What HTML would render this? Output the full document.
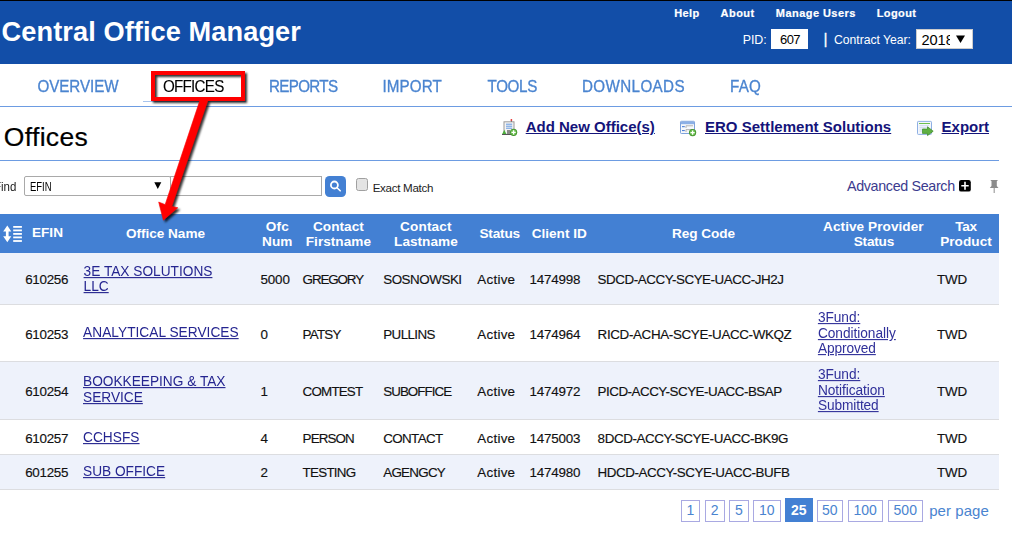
<!DOCTYPE html>
<html><head><meta charset="utf-8"><title>Central Office Manager</title>
<style>
html,body{margin:0;padding:0;}
body{width:1012px;height:537px;overflow:hidden;position:relative;background:#fff;font-family:"Liberation Sans",sans-serif;}
.t{position:absolute;white-space:nowrap;}
.b{position:absolute;}
.pg{position:absolute;box-sizing:border-box;border:1px solid #a9a9e2;color:#4a84d0;font-size:14px;line-height:19.5px;text-align:center;}
.pg.on{background:#4380d3;border-color:#4380d3;color:#fff;font-weight:bold;line-height:22px;}
</style></head><body>
<div class="b" style="left:0px;top:0px;width:1012px;height:1px;background:#000;"></div>
<div class="b" style="left:0px;top:1px;width:1012px;height:63px;background:#124ea8;"></div>
<div class="t " style="left:1.60px;top:18.18px;font-size:27.2px;line-height:27.2px;font-weight:bold;color:#fff;letter-spacing:0.080px;">Central Office Manager</div>
<div class="t " style="left:674.20px;top:8.29px;font-size:11px;line-height:11px;font-weight:bold;color:#fff;letter-spacing:0.366px;-webkit-text-stroke:0.2px #fff;">Help</div>
<div class="t " style="left:720.50px;top:8.29px;font-size:11px;line-height:11px;font-weight:bold;color:#fff;letter-spacing:0.487px;-webkit-text-stroke:0.2px #fff;">About</div>
<div class="t " style="left:775.80px;top:8.29px;font-size:11px;line-height:11px;font-weight:bold;color:#fff;letter-spacing:0.451px;-webkit-text-stroke:0.2px #fff;">Manage Users</div>
<div class="t " style="left:876.70px;top:8.29px;font-size:11px;line-height:11px;font-weight:bold;color:#fff;letter-spacing:0.391px;-webkit-text-stroke:0.2px #fff;">Logout</div>
<div class="t " style="left:742.80px;top:33.80px;font-size:12.4px;line-height:12.4px;color:#fff;letter-spacing:-0.104px;">PID:</div>
<div class="b" style="left:771px;top:29px;width:37px;height:20px;background:#fff;"></div>
<div class="t " style="left:780.00px;top:33.30px;font-size:13px;line-height:13px;color:#000;letter-spacing:-0.563px;">607</div>
<div class="t " style="left:823.40px;top:31.08px;font-size:15.5px;line-height:15.5px;color:#fff;-webkit-text-stroke:0.3px #fff;">|</div>
<div class="t " style="left:834.00px;top:33.97px;font-size:12.2px;line-height:12.2px;color:#fff;letter-spacing:-0.022px;">Contract Year:</div>
<div class="b" style="left:916px;top:29px;width:57px;height:20px;background:#fff;border:1px solid #ccc;box-sizing:border-box;"></div>
<div class="b" style="left:921px;top:29px;width:29px;height:20px;overflow:hidden;"><div class="t" style="left:0.4px;top:3.5px;font-size:14.6px;line-height:14.6px;color:#000;">2018</div></div>
<svg class="b" style="left:952px;top:30px" width="16" height="18" viewBox="952 30 16 18"><path d="M956 35.4 H965 L960.5 43 Z" fill="#000"/></svg>
<div class="t " style="left:37.50px;top:79.03px;font-size:15.2px;line-height:15.2px;color:#4a84d0;letter-spacing:-0.081px;-webkit-text-stroke:0.3px #4a84d0;transform:scaleY(1.1);transform-origin:0 12.87px;">OVERVIEW</div>
<div class="t " style="left:163.00px;top:79.03px;font-size:15.2px;line-height:15.2px;color:#000;letter-spacing:-0.753px;-webkit-text-stroke:0.1px #000;transform:scaleY(1.1);transform-origin:0 12.87px;">OFFICES</div>
<div class="t " style="left:269.00px;top:79.03px;font-size:15.2px;line-height:15.2px;color:#4a84d0;letter-spacing:-0.672px;-webkit-text-stroke:0.3px #4a84d0;transform:scaleY(1.1);transform-origin:0 12.87px;">REPORTS</div>
<div class="t " style="left:382.50px;top:79.03px;font-size:15.2px;line-height:15.2px;color:#4a84d0;letter-spacing:0.111px;-webkit-text-stroke:0.3px #4a84d0;transform:scaleY(1.1);transform-origin:0 12.87px;">IMPORT</div>
<div class="t " style="left:487.50px;top:79.03px;font-size:15.2px;line-height:15.2px;color:#4a84d0;letter-spacing:-0.349px;-webkit-text-stroke:0.3px #4a84d0;transform:scaleY(1.1);transform-origin:0 12.87px;">TOOLS</div>
<div class="t " style="left:582.00px;top:79.03px;font-size:15.2px;line-height:15.2px;color:#4a84d0;letter-spacing:0.372px;-webkit-text-stroke:0.3px #4a84d0;transform:scaleY(1.1);transform-origin:0 12.87px;">DOWNLOADS</div>
<div class="t " style="left:730.00px;top:79.03px;font-size:15.2px;line-height:15.2px;color:#4a84d0;letter-spacing:0.198px;-webkit-text-stroke:0.3px #4a84d0;transform:scaleY(1.1);transform-origin:0 12.87px;">FAQ</div>
<div class="b" style="left:143px;top:101px;width:103px;height:1px;background:#6d9ce2;opacity:.6;"></div>
<div class="b" style="left:0px;top:106px;width:1012px;height:1px;background:#6d9ce2;"></div>
<div class="t " style="left:3.70px;top:123.57px;font-size:26.5px;line-height:26.5px;color:#000;letter-spacing:0.360px;-webkit-text-stroke:0.2px #000;">Offices</div>
<div class="b" style="left:0px;top:160px;width:999px;height:1px;background:#6d9ce2;"></div>
<div class="t " style="left:525.70px;top:119.10px;font-size:15px;line-height:15px;font-weight:bold;color:#14147a;text-decoration:underline;">Add New Office(s)</div>
<div class="t " style="left:705.00px;top:119.10px;font-size:15px;line-height:15px;font-weight:bold;color:#14147a;letter-spacing:0.015px;text-decoration:underline;">ERO Settlement Solutions</div>
<div class="t " style="left:941.60px;top:119.10px;font-size:15px;line-height:15px;font-weight:bold;color:#14147a;letter-spacing:-0.017px;text-decoration:underline;">Export</div>
<div class="t " style="left:-5.60px;top:180.84px;font-size:12px;line-height:12px;color:#222;transform:scaleX(0.9596);transform-origin:0 0;">Find</div>
<div class="b" style="left:24px;top:176px;width:147px;height:20px;background:#fff;border:1px solid #a9a9a9;box-sizing:border-box;border-radius:2px;"></div>
<div class="t " style="left:29.60px;top:180.84px;font-size:12px;line-height:12px;color:#000;transform:scaleX(0.7902);transform-origin:0 0;">EFIN</div>
<svg class="b" style="left:150px;top:178px" width="16" height="16" viewBox="150 178 16 16"><path d="M154.3 182.2 H161.3 L157.8 188.9 Z" fill="#000"/></svg>
<div class="b" style="left:170px;top:176px;width:152px;height:20px;background:#fff;border:1px solid #a9a9a9;box-sizing:border-box;"></div>
<div class="b" style="left:325px;top:176px;width:20.600000000000023px;height:20.80000000000001px;background:#4380d3;border-radius:4.5px;"></div>
<div class="t " style="left:372.70px;top:181.78px;font-size:11.6px;line-height:11.6px;color:#222;letter-spacing:-0.302px;">Exact Match</div>
<div class="b" style="left:356px;top:178px;width:12px;height:13px;background:#e4e4e4;border:1px solid #a0a0a0;box-sizing:border-box;border-radius:2.5px;"></div>
<div class="t " style="left:847.00px;top:179.10px;font-size:14.3px;line-height:14.3px;color:#3b3b8e;letter-spacing:-0.339px;">Advanced Search</div>
<div class="b" style="left:0px;top:214px;width:999px;height:39px;background:#4380d3;"></div>
<div class="t " style="left:32.00px;top:226.39px;font-size:13.6px;line-height:13.6px;font-weight:bold;color:#fff;">EFIN</div>
<div class="t " style="left:126.00px;top:227.09px;font-size:13.6px;line-height:13.6px;font-weight:bold;color:#fff;letter-spacing:-0.033px;">Office Name</div>
<div class="t " style="left:265.75px;top:219.79px;font-size:13.6px;line-height:13.6px;font-weight:bold;color:#fff;letter-spacing:0.144px;">Ofc</div>
<div class="t " style="left:262.05px;top:234.79px;font-size:13.6px;line-height:13.6px;font-weight:bold;color:#fff;letter-spacing:0.026px;">Num</div>
<div class="t " style="left:313.00px;top:219.79px;font-size:13.6px;line-height:13.6px;font-weight:bold;color:#fff;letter-spacing:0.026px;">Contact</div>
<div class="t " style="left:305.80px;top:234.79px;font-size:13.6px;line-height:13.6px;font-weight:bold;color:#fff;letter-spacing:0.023px;">Firstname</div>
<div class="t " style="left:400.05px;top:219.79px;font-size:13.6px;line-height:13.6px;font-weight:bold;color:#fff;letter-spacing:0.155px;">Contact</div>
<div class="t " style="left:394.05px;top:234.79px;font-size:13.6px;line-height:13.6px;font-weight:bold;color:#fff;letter-spacing:0.027px;">Lastname</div>
<div class="t " style="left:479.40px;top:227.09px;font-size:13.6px;line-height:13.6px;font-weight:bold;color:#fff;letter-spacing:-0.160px;">Status</div>
<div class="t " style="left:531.70px;top:227.09px;font-size:13.6px;line-height:13.6px;font-weight:bold;color:#fff;">Client ID</div>
<div class="t " style="left:672.00px;top:227.09px;font-size:13.6px;line-height:13.6px;font-weight:bold;color:#fff;letter-spacing:-0.058px;">Reg Code</div>
<div class="t " style="left:823.05px;top:219.79px;font-size:13.6px;line-height:13.6px;font-weight:bold;color:#fff;letter-spacing:0.062px;">Active Provider</div>
<div class="t " style="left:853.75px;top:234.79px;font-size:13.6px;line-height:13.6px;font-weight:bold;color:#fff;letter-spacing:-0.210px;">Status</div>
<div class="t " style="left:955.20px;top:219.79px;font-size:13.6px;line-height:13.6px;font-weight:bold;color:#fff;letter-spacing:-0.274px;">Tax</div>
<div class="t " style="left:940.15px;top:234.79px;font-size:13.6px;line-height:13.6px;font-weight:bold;color:#fff;letter-spacing:0.046px;">Product</div>
<div class="b" style="left:0px;top:253px;width:999px;height:51px;background:#eef2fb;"></div>
<div class="b" style="left:0px;top:304px;width:999px;height:57px;background:#fff;"></div>
<div class="b" style="left:0px;top:361px;width:999px;height:58px;background:#eef2fb;"></div>
<div class="b" style="left:0px;top:419px;width:999px;height:35px;background:#fff;"></div>
<div class="b" style="left:0px;top:454px;width:999px;height:35px;background:#eef2fb;"></div>
<div class="b" style="left:0px;top:304px;width:999px;height:1px;background:#dcdde0;"></div>
<div class="b" style="left:0px;top:361px;width:999px;height:1px;background:#dcdde0;"></div>
<div class="b" style="left:0px;top:419px;width:999px;height:1px;background:#dcdde0;"></div>
<div class="b" style="left:0px;top:454px;width:999px;height:1px;background:#dcdde0;"></div>
<div class="b" style="left:0px;top:489px;width:999px;height:1px;background:#dcdde0;"></div>
<div class="t " style="left:25.20px;top:272.86px;font-size:13.4px;line-height:13.4px;color:#111;letter-spacing:-0.285px;-webkit-text-stroke:0.15px #111;">610256</div>
<div class="t " style="left:83.60px;top:264.70px;font-size:13.7px;line-height:13.7px;color:#252590;text-decoration:underline;transform:scaleY(1.12);transform-origin:0 11.6px;">3E TAX SOLUTIONS</div>
<div class="t " style="left:83.60px;top:279.60px;font-size:13.7px;line-height:13.7px;color:#252590;text-decoration:underline;transform:scaleY(1.12);transform-origin:0 11.6px;">LLC</div>
<div class="t " style="left:260.40px;top:272.86px;font-size:13.4px;line-height:13.4px;color:#111;letter-spacing:-0.102px;-webkit-text-stroke:0.15px #111;">5000</div>
<div class="t " style="left:302.60px;top:272.86px;font-size:13.4px;line-height:13.4px;color:#111;letter-spacing:-1.122px;-webkit-text-stroke:0.15px #111;">GREGORY</div>
<div class="t " style="left:383.20px;top:272.86px;font-size:13.4px;line-height:13.4px;color:#111;letter-spacing:-0.461px;-webkit-text-stroke:0.15px #111;">SOSNOWSKI</div>
<div class="t " style="left:477.30px;top:272.86px;font-size:13.4px;line-height:13.4px;color:#111;letter-spacing:0.252px;-webkit-text-stroke:0.15px #111;">Active</div>
<div class="t " style="left:529.50px;top:272.86px;font-size:13.4px;line-height:13.4px;color:#111;letter-spacing:-0.195px;-webkit-text-stroke:0.15px #111;">1474998</div>
<div class="t " style="left:597.60px;top:272.86px;font-size:13.4px;line-height:13.4px;color:#111;letter-spacing:-0.450px;-webkit-text-stroke:0.15px #111;">SDCD-ACCY-SCYE-UACC-JH2J</div>
<div class="t " style="left:937.00px;top:272.86px;font-size:13.4px;line-height:13.4px;color:#111;letter-spacing:-0.170px;-webkit-text-stroke:0.15px #111;">TWD</div>
<div class="t " style="left:25.20px;top:327.76px;font-size:13.4px;line-height:13.4px;color:#111;letter-spacing:-0.285px;-webkit-text-stroke:0.15px #111;">610253</div>
<div class="t " style="left:83.10px;top:326.20px;font-size:13.7px;line-height:13.7px;color:#252590;letter-spacing:0.033px;text-decoration:underline;transform:scaleY(1.12);transform-origin:0 11.6px;">ANALYTICAL SERVICES</div>
<div class="t " style="left:260.40px;top:327.76px;font-size:13.4px;line-height:13.4px;color:#111;-webkit-text-stroke:0.15px #111;">0</div>
<div class="t " style="left:302.60px;top:327.76px;font-size:13.4px;line-height:13.4px;color:#111;letter-spacing:-0.790px;-webkit-text-stroke:0.15px #111;">PATSY</div>
<div class="t " style="left:383.20px;top:327.76px;font-size:13.4px;line-height:13.4px;color:#111;letter-spacing:-0.580px;-webkit-text-stroke:0.15px #111;">PULLINS</div>
<div class="t " style="left:477.30px;top:327.76px;font-size:13.4px;line-height:13.4px;color:#111;letter-spacing:0.252px;-webkit-text-stroke:0.15px #111;">Active</div>
<div class="t " style="left:529.50px;top:327.76px;font-size:13.4px;line-height:13.4px;color:#111;letter-spacing:-0.195px;-webkit-text-stroke:0.15px #111;">1474964</div>
<div class="t " style="left:597.60px;top:327.76px;font-size:13.4px;line-height:13.4px;color:#111;letter-spacing:-0.354px;-webkit-text-stroke:0.15px #111;">RICD-ACHA-SCYE-UACC-WKQZ</div>
<div class="t " style="left:937.00px;top:327.76px;font-size:13.4px;line-height:13.4px;color:#111;letter-spacing:-0.170px;-webkit-text-stroke:0.15px #111;">TWD</div>
<div class="t " style="left:817.90px;top:311.00px;font-size:13.7px;line-height:13.7px;color:#30309a;letter-spacing:-0.041px;text-decoration:underline;transform:scaleY(1.1);transform-origin:0 11.6px;">3Fund:</div>
<div class="t " style="left:817.90px;top:326.50px;font-size:13.7px;line-height:13.7px;color:#30309a;letter-spacing:-0.034px;text-decoration:underline;transform:scaleY(1.1);transform-origin:0 11.6px;">Conditionally</div>
<div class="t " style="left:817.90px;top:342.00px;font-size:13.7px;line-height:13.7px;color:#30309a;letter-spacing:-0.080px;text-decoration:underline;transform:scaleY(1.1);transform-origin:0 11.6px;">Approved</div>
<div class="t " style="left:25.20px;top:385.06px;font-size:13.4px;line-height:13.4px;color:#111;letter-spacing:-0.285px;-webkit-text-stroke:0.15px #111;">610254</div>
<div class="t " style="left:83.00px;top:375.40px;font-size:13.7px;line-height:13.7px;color:#252590;text-decoration:underline;transform:scaleY(1.12);transform-origin:0 11.6px;">BOOKKEEPING &amp; TAX</div>
<div class="t " style="left:83.00px;top:391.00px;font-size:13.7px;line-height:13.7px;color:#252590;text-decoration:underline;transform:scaleY(1.12);transform-origin:0 11.6px;">SERVICE</div>
<div class="t " style="left:260.40px;top:385.06px;font-size:13.4px;line-height:13.4px;color:#111;-webkit-text-stroke:0.15px #111;">1</div>
<div class="t " style="left:302.60px;top:385.06px;font-size:13.4px;line-height:13.4px;color:#111;letter-spacing:-0.815px;-webkit-text-stroke:0.15px #111;">COMTEST</div>
<div class="t " style="left:383.20px;top:385.06px;font-size:13.4px;line-height:13.4px;color:#111;letter-spacing:-0.954px;-webkit-text-stroke:0.15px #111;">SUBOFFICE</div>
<div class="t " style="left:477.30px;top:385.06px;font-size:13.4px;line-height:13.4px;color:#111;letter-spacing:0.252px;-webkit-text-stroke:0.15px #111;">Active</div>
<div class="t " style="left:529.50px;top:385.06px;font-size:13.4px;line-height:13.4px;color:#111;letter-spacing:-0.195px;-webkit-text-stroke:0.15px #111;">1474972</div>
<div class="t " style="left:597.60px;top:385.06px;font-size:13.4px;line-height:13.4px;color:#111;letter-spacing:-0.495px;-webkit-text-stroke:0.15px #111;">PICD-ACCY-SCYE-UACC-BSAP</div>
<div class="t " style="left:937.00px;top:385.06px;font-size:13.4px;line-height:13.4px;color:#111;letter-spacing:-0.170px;-webkit-text-stroke:0.15px #111;">TWD</div>
<div class="t " style="left:817.90px;top:368.30px;font-size:13.7px;line-height:13.7px;color:#30309a;letter-spacing:-0.041px;text-decoration:underline;transform:scaleY(1.1);transform-origin:0 11.6px;">3Fund:</div>
<div class="t " style="left:817.90px;top:383.80px;font-size:13.7px;line-height:13.7px;color:#30309a;letter-spacing:-0.064px;text-decoration:underline;transform:scaleY(1.1);transform-origin:0 11.6px;">Notification</div>
<div class="t " style="left:817.90px;top:399.30px;font-size:13.7px;line-height:13.7px;color:#30309a;letter-spacing:-0.098px;text-decoration:underline;transform:scaleY(1.1);transform-origin:0 11.6px;">Submitted</div>
<div class="t " style="left:25.20px;top:431.86px;font-size:13.4px;line-height:13.4px;color:#111;letter-spacing:-0.285px;-webkit-text-stroke:0.15px #111;">610257</div>
<div class="t " style="left:83.00px;top:430.60px;font-size:13.7px;line-height:13.7px;color:#252590;letter-spacing:0.046px;text-decoration:underline;transform:scaleY(1.12);transform-origin:0 11.6px;">CCHSFS</div>
<div class="t " style="left:260.40px;top:431.86px;font-size:13.4px;line-height:13.4px;color:#111;-webkit-text-stroke:0.15px #111;">4</div>
<div class="t " style="left:302.60px;top:431.86px;font-size:13.4px;line-height:13.4px;color:#111;letter-spacing:-0.899px;-webkit-text-stroke:0.15px #111;">PERSON</div>
<div class="t " style="left:383.20px;top:431.86px;font-size:13.4px;line-height:13.4px;color:#111;letter-spacing:-0.610px;-webkit-text-stroke:0.15px #111;">CONTACT</div>
<div class="t " style="left:477.30px;top:431.86px;font-size:13.4px;line-height:13.4px;color:#111;letter-spacing:0.252px;-webkit-text-stroke:0.15px #111;">Active</div>
<div class="t " style="left:529.50px;top:431.86px;font-size:13.4px;line-height:13.4px;color:#111;letter-spacing:-0.195px;-webkit-text-stroke:0.15px #111;">1475003</div>
<div class="t " style="left:597.60px;top:431.86px;font-size:13.4px;line-height:13.4px;color:#111;letter-spacing:-0.414px;-webkit-text-stroke:0.15px #111;">8DCD-ACCY-SCYE-UACC-BK9G</div>
<div class="t " style="left:937.00px;top:431.86px;font-size:13.4px;line-height:13.4px;color:#111;letter-spacing:-0.170px;-webkit-text-stroke:0.15px #111;">TWD</div>
<div class="t " style="left:25.20px;top:466.46px;font-size:13.4px;line-height:13.4px;color:#111;letter-spacing:-0.285px;-webkit-text-stroke:0.15px #111;">601255</div>
<div class="t " style="left:83.00px;top:465.30px;font-size:13.7px;line-height:13.7px;color:#252590;text-decoration:underline;transform:scaleY(1.12);transform-origin:0 11.6px;">SUB OFFICE</div>
<div class="t " style="left:260.40px;top:466.46px;font-size:13.4px;line-height:13.4px;color:#111;-webkit-text-stroke:0.15px #111;">2</div>
<div class="t " style="left:302.60px;top:466.46px;font-size:13.4px;line-height:13.4px;color:#111;letter-spacing:-0.738px;-webkit-text-stroke:0.15px #111;">TESTING</div>
<div class="t " style="left:383.20px;top:466.46px;font-size:13.4px;line-height:13.4px;color:#111;letter-spacing:-0.731px;-webkit-text-stroke:0.15px #111;">AGENGCY</div>
<div class="t " style="left:477.30px;top:466.46px;font-size:13.4px;line-height:13.4px;color:#111;letter-spacing:0.252px;-webkit-text-stroke:0.15px #111;">Active</div>
<div class="t " style="left:529.50px;top:466.46px;font-size:13.4px;line-height:13.4px;color:#111;letter-spacing:-0.195px;-webkit-text-stroke:0.15px #111;">1474980</div>
<div class="t " style="left:597.60px;top:466.46px;font-size:13.4px;line-height:13.4px;color:#111;letter-spacing:-0.448px;-webkit-text-stroke:0.15px #111;">HDCD-ACCY-SCYE-UACC-BUFB</div>
<div class="t " style="left:937.00px;top:466.46px;font-size:13.4px;line-height:13.4px;color:#111;letter-spacing:-0.170px;-webkit-text-stroke:0.15px #111;">TWD</div>
<div class="pg" style="left:681px;top:500px;width:19px;height:21.5px;">1</div>
<div class="pg" style="left:704.5px;top:500px;width:20.5px;height:21.5px;">2</div>
<div class="pg" style="left:729px;top:500px;width:20px;height:21.5px;">5</div>
<div class="pg" style="left:753px;top:500px;width:27.5px;height:21.5px;">10</div>
<div class="pg" style="left:816.7px;top:500px;width:26.299999999999955px;height:21.5px;">50</div>
<div class="pg" style="left:847.7px;top:500px;width:34.89999999999998px;height:21.5px;">100</div>
<div class="pg" style="left:887.5px;top:500px;width:35.5px;height:21.5px;">500</div>
<div class="pg on" style="left:784.7px;top:498px;width:28px;height:23.7px;">25</div>
<div class="t " style="left:929.20px;top:502.90px;font-size:15px;line-height:15px;color:#4a84d0;letter-spacing:0.061px;">per page</div>
<svg class="b" style="left:498px;top:114px" width="24" height="26" viewBox="498 114 24 26">
<rect x="504" y="121.8" width="10" height="12.6" fill="#f4f4f4" stroke="#9a9a9a" stroke-width="1"/>
<rect x="506" y="123.6" width="6.2" height="1.3" fill="#86aee6"/>
<rect x="506" y="125.6" width="6.2" height="1.3" fill="#86aee6"/>
<rect x="506" y="127.6" width="6.2" height="1.3" fill="#86aee6"/>
<rect x="507" y="130" width="3" height="4.4" fill="#8a8a8a"/>
<line x1="511.4" y1="119.5" x2="511.4" y2="122" stroke="#777" stroke-width="1"/>
<circle cx="511.4" cy="119.9" r="0.9" fill="#e33"/>
<path d="M502.2 134 L504.3 129.8 L506.4 134 Z" fill="#4cae3c"/>
<rect x="502" y="134" width="11" height="1" fill="#555"/>
<circle cx="513.6" cy="132.3" r="3.6" fill="#3f8f2a"/>
<circle cx="513.6" cy="132.3" r="2.8" fill="#6bbf4e"/>
<path d="M511.5 132.3 H515.7 M513.6 130.2 V134.4" stroke="#fff" stroke-width="1.3"/>
</svg>
<svg class="b" style="left:676px;top:114px" width="24" height="26" viewBox="676 114 24 26">
<rect x="680.5" y="121.3" width="14" height="12.2" rx="0.8" fill="#f6f8fc" stroke="#7ea3dc" stroke-width="1"/>
<rect x="681" y="121.8" width="13" height="2.4" fill="#8cb0e6"/>
<rect x="682" y="126.1" width="2.8" height="1.1" fill="#4d7fd4"/>
<rect x="682" y="130" width="2.8" height="1.1" fill="#4d7fd4"/>
<path d="M686 125.8 H693 M686 125.8 V128 M686 129.6 H693 M686 129.6 V132" stroke="#aaa" stroke-width="0.9" fill="none"/>
<circle cx="692.6" cy="132.6" r="3.6" fill="#3f8f2a"/>
<circle cx="692.6" cy="132.6" r="2.8" fill="#6bbf4e"/>
<path d="M690.5 132.6 H694.7 M692.6 130.5 V134.7" stroke="#fff" stroke-width="1.3"/>
</svg>
<svg class="b" style="left:912px;top:114px" width="26" height="26" viewBox="912 114 26 26">
<rect x="917.5" y="121.4" width="14" height="13" rx="0.8" fill="#f4f7fc" stroke="#8eb0e4" stroke-width="1"/>
<rect x="919" y="123" width="11" height="1" fill="#6cbf50"/>
<path d="M919.5 125.6 H929 M919.5 127.4 H929 M919.5 129.2 H925 M919.5 131 H925" stroke="#c9d6ee" stroke-width="0.8"/>
<path d="M922.5 129 H927.5 V126.8 L933.2 131.2 L927.5 135.6 V133.4 H922.5 Z" fill="#5fb043" stroke="#3b8a25" stroke-width="0.7"/>
</svg>
<svg class="b" style="left:325px;top:176px" width="21" height="21" viewBox="325 176 21 21">
<circle cx="334.4" cy="185" r="3.5" fill="none" stroke="#fff" stroke-width="1.8"/>
<line x1="337" y1="187.7" x2="340.2" y2="190.8" stroke="#fff" stroke-width="1.6" stroke-linecap="round"/>
</svg>
<svg class="b" style="left:0px;top:222px" width="30" height="24" viewBox="0 222 30 24">
<path d="M7.3 225.6 L11.3 231.6 H8.6 V236.2 H11.3 L7.3 242.2 L3.2 236.2 H5.9 V231.6 H3.2 Z" fill="#fff"/>
<g fill="#fff"><rect x="13.2" y="226" width="8.7" height="1.8"/><rect x="13.2" y="229.5" width="8.7" height="1.8"/><rect x="13.2" y="233" width="8.7" height="1.8"/><rect x="13.2" y="236.5" width="8.7" height="1.8"/><rect x="13.2" y="240.1" width="8.7" height="1.8"/></g>
</svg>
<svg class="b" style="left:954px;top:174px" width="50" height="24" viewBox="954 174 50 24">
<rect x="959" y="180" width="11.8" height="11.6" rx="2.2" fill="#000"/>
<path d="M961.3 185.7 H968.7 M965 181.8 V189.7" stroke="#fff" stroke-width="1.6"/>
<path d="M990.3 180 H998 L996.8 181.3 V186 L998.5 188 H989.8 L991.5 186 V181.3 Z" fill="#8c8c8c"/>
<rect x="993.6" y="188" width="1.2" height="5" fill="#a0a0a0"/>
</svg>
<svg class="b" style="left:0;top:0;filter:drop-shadow(2px 2px 1.3px rgba(0,0,0,.8));" width="300" height="240" viewBox="0 0 300 240">
<rect x="153" y="73" width="90" height="26" fill="none" stroke="#ff0000" stroke-width="4"/>
<path d="M200.3 99 L208.4 99 L171.8 206.4 L177.8 207.75 L163.4 220.15 L158.7 202.05 L165.1 204.7 Z" fill="#ff0000" stroke="#ff0000" stroke-width="0.6" stroke-linejoin="round"/>
</svg>
</body></html>
